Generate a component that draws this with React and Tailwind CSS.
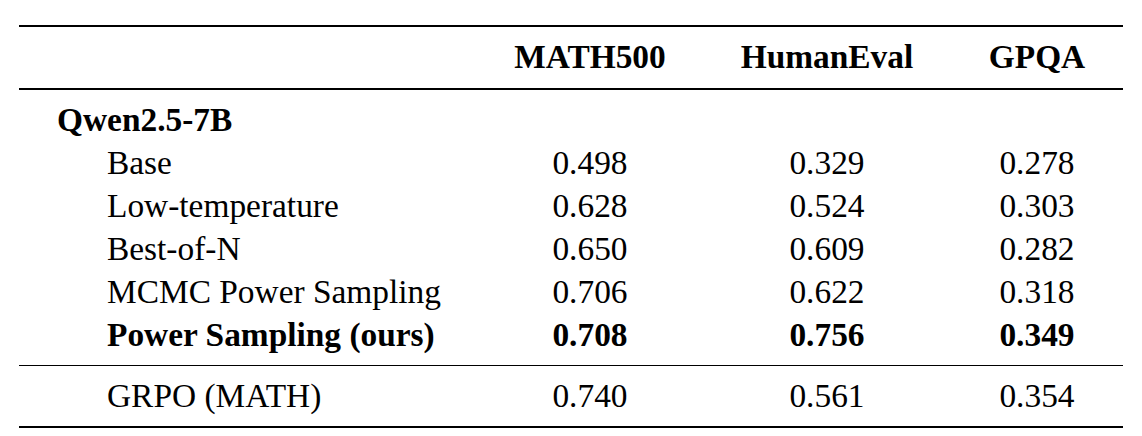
const rows = [
  { name: "Base", vals: ["0.498", "0.329", "0.278"] },
  { name: "Low-temperature", vals: ["0.628", "0.524", "0.303"] },
  { name: "Best-of-N", vals: ["0.650", "0.609", "0.282"] },
  { name: "MCMC Power Sampling", vals: ["0.706", "0.622", "0.318"] },
  { name: "Power Sampling (ours)", vals: ["0.708", "0.756", "0.349"], bold: true },
];

function Row({ name, vals, bold, indent = true }) {
  return (
    <div className={`grid grid-cols-[458px_226px_248px_172px] h-[43px] items-center leading-[43px] ${bold ? "font-bold" : ""}`}>
      <div className={indent ? "pl-[88px] whitespace-nowrap" : "pl-[38px] whitespace-nowrap"}>{name}</div>
      {vals.map((v, i) => (
        <div key={i} className="text-center">{v}</div>
      ))}
    </div>
  );
}

export default function App() {
  return (
    <div className="w-[1142px] h-[436px] bg-white text-black text-[33.4px]" style={{ fontFamily: '"Liberation Serif", "Times New Roman", serif' }}>
      <div className="mx-[19px] pt-[25px] flex flex-col">
        {/* top rule */}
        <div className="h-[2px] bg-black" />
        <div className="grid grid-cols-[458px_226px_248px_172px] h-[61px] items-center font-bold">
          <div />
          <div className="text-center">MATH500</div>
          <div className="text-center">HumanEval</div>
          <div className="text-center">GPQA</div>
        </div>
        <div className="h-[1.5px] bg-black" />

        <div className="h-[8px]" />
        <div className="h-[43px] leading-[43px] pl-[38px] font-bold">Qwen2.5-7B</div>
        {rows.map((r) => (
          <Row key={r.name} {...r} />
        ))}
        <div className="h-[9px]" />

        <div className="h-[1.5px] bg-black" />
        <div className="h-[8px]" />
        <Row name="GRPO (MATH)" vals={["0.740", "0.561", "0.354"]} />
        <div className="h-[9px]" />
        {/* bottom rule */}
        <div className="h-[2px] bg-black" />
      </div>
    </div>
  );
}
